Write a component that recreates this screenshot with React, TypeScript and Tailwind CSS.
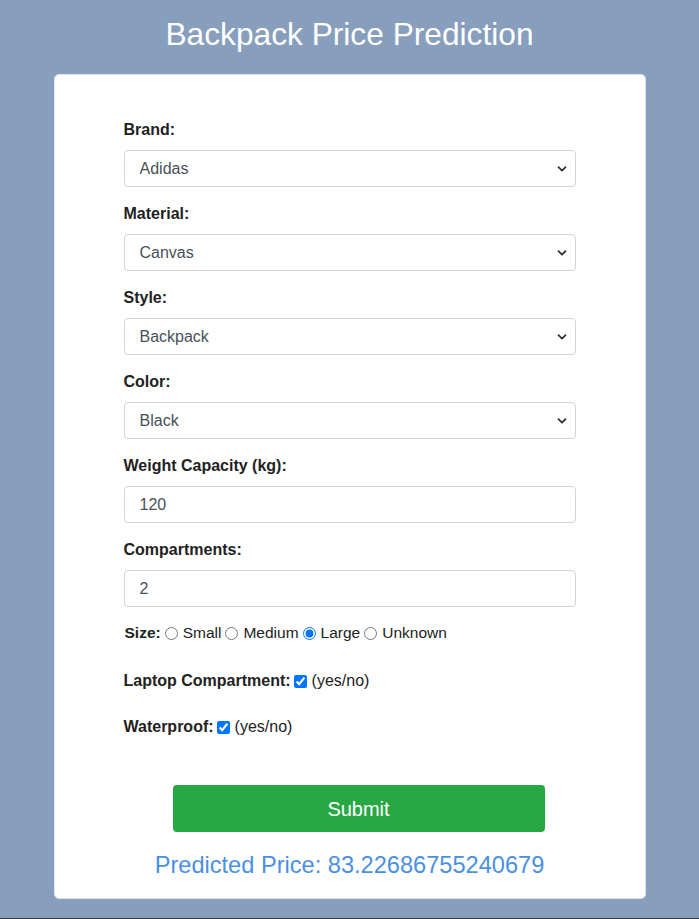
import { useState } from "react"

const fieldClasses =
  "block w-full h-[37px] rounded-[4px] border border-[#ced4da] bg-white pl-[15px] pr-8 text-[16px] text-[#495057] outline-none"

function Chevron() {
  return (
    <svg
      className="pointer-events-none absolute right-[9px] top-1/2 -translate-y-1/2"
      width="10"
      height="6"
      viewBox="0 0 10 6"
      fill="none"
    >
      <path d="M1.5 1.2 L5 4.6 L8.5 1.2" stroke="#333" strokeWidth="1.8" strokeLinecap="round" strokeLinejoin="round" />
    </svg>
  )
}

function SelectField({ label, value, options }: { label: string; value: string; options: string[] }) {
  const [v, setV] = useState(value)
  return (
    <div className="mb-[18px]">
      <label className="block mb-[11px] text-[16px] leading-[18px] font-bold text-[#222]">{label}</label>
      <div className="relative">
        <select className={cn(fieldClasses, "appearance-none")} value={v} onChange={(e) => setV(e.target.value)}>
          {options.map((o) => (
            <option key={o}>{o}</option>
          ))}
        </select>
        <Chevron />
      </div>
    </div>
  )
}

function cn(...c: string[]) {
  return c.join(" ")
}

export default function App() {
  const [size, setSize] = useState("Large")
  const [laptop, setLaptop] = useState(true)
  const [waterproof, setWaterproof] = useState(true)

  return (
    <div className="min-h-[919px] bg-[#889ebd] flex flex-col" style={{ fontFamily: '"Liberation Sans", Arial, sans-serif' }}>
      <h1 className="pt-[16px] text-center text-[31.7px] leading-[37px] text-white font-normal">Backpack Price Prediction</h1>

      <div className="mx-auto mt-[21px] w-[592px] rounded-[5px] border border-[#dde2ea] bg-white px-[69px] pt-[46px] pb-[19px]">
        <SelectField label="Brand:" value="Adidas" options={["Adidas", "Nike", "Puma", "Under Armour", "Jansport"]} />
        <SelectField label="Material:" value="Canvas" options={["Canvas", "Leather", "Nylon", "Polyester"]} />
        <SelectField label="Style:" value="Backpack" options={["Backpack", "Messenger", "Tote"]} />
        <SelectField label="Color:" value="Black" options={["Black", "Blue", "Gray", "Green", "Pink", "Red"]} />

        <div className="mb-[18px]">
          <label className="block mb-[11px] text-[16px] leading-[18px] font-bold text-[#222]">Weight Capacity (kg):</label>
          <input className={fieldClasses} defaultValue="120" />
        </div>

        <div className="mb-[17px]">
          <label className="block mb-[11px] text-[16px] leading-[18px] font-bold text-[#222]">Compartments:</label>
          <input className={fieldClasses} defaultValue="2" />
        </div>

        <div className="flex items-center pl-[1px] text-[15.5px] leading-[18px] text-[#222]">
          <span className="font-bold mr-[4px]">Size:</span>
          {["Small", "Medium", "Large", "Unknown"].map((s) => (
            <label key={s} className="flex items-center mr-[4px]">
              <input
                type="radio"
                name="size"
                className="m-0 mr-[5px] h-[13px] w-[13px] accent-[#0075ff]"
                checked={size === s}
                onChange={() => setSize(s)}
              />
              {s}
            </label>
          ))}
        </div>

        <div className="mt-[30px] flex items-center text-[16px] leading-[18px] text-[#222]">
          <span className="font-bold mr-[3px]">Laptop Compartment:</span>
          <input
            type="checkbox"
            className="m-0 mr-[5px] h-[13px] w-[13px] accent-[#0075ff]"
            checked={laptop}
            onChange={(e) => setLaptop(e.target.checked)}
          />
          (yes/no)
        </div>

        <div className="mt-[28px] flex items-center text-[16px] leading-[18px] text-[#222]">
          <span className="font-bold mr-[3px]">Waterproof:</span>
          <input
            type="checkbox"
            className="m-0 mr-[5px] h-[13px] w-[13px] accent-[#0075ff]"
            checked={waterproof}
            onChange={(e) => setWaterproof(e.target.checked)}
          />
          (yes/no)
        </div>

        <button className="ml-[49px] mt-[49px] block h-[47px] w-[372px] rounded-[4px] bg-[#28a745] text-[20px] text-white">
          Submit
        </button>

        <p className="mt-[19px] text-center text-[23.6px] leading-[28px] text-[#4a90e2]">Predicted Price: 83.22686755240679</p>
      </div>

      <div className="mt-auto h-px bg-[#3a3f47]" />
    </div>
  )
}
